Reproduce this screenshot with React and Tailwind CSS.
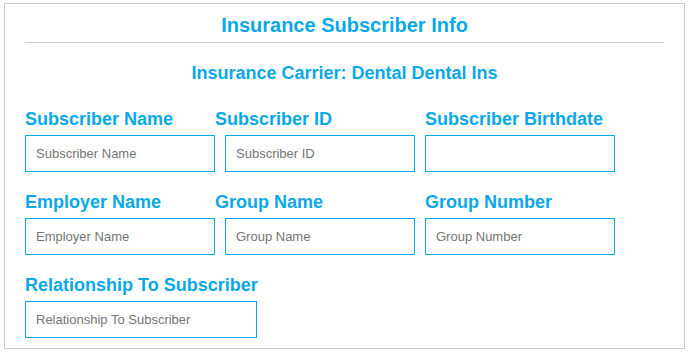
const fields = [
  [
    { label: 'Subscriber Name', placeholder: 'Subscriber Name' },
    { label: 'Subscriber ID', placeholder: 'Subscriber ID', shift: true },
    { label: 'Subscriber Birthdate', placeholder: '' },
  ],
  [
    { label: 'Employer Name', placeholder: 'Employer Name' },
    { label: 'Group Name', placeholder: 'Group Name', shift: true },
    { label: 'Group Number', placeholder: 'Group Number' },
  ],
];

const Field = ({ label, placeholder, shift, width = 'w-[190px]' }) => (
  <div className="flex flex-col">
    <label
      className={`text-[18px] leading-[20px] font-bold text-[#0aa8e8] mb-[6px] whitespace-nowrap ${
        shift ? '-ml-[10px]' : ''
      }`}
    >
      {label}
    </label>
    <input
      type="text"
      placeholder={placeholder}
      className={`${width} h-[37px] border border-[#0aa8e8] px-[10px] text-[13px] text-[#555] placeholder:text-[#757575] outline-none bg-white`}
    />
  </div>
);

export default function App() {
  return (
    <div
      className="w-[688px] h-[352px] bg-white pt-[3px] pl-[4px]"
      style={{ fontFamily: '"Liberation Sans", Arial, sans-serif' }}
    >
      <div className="w-[681px] h-[346px] border border-[#cccccc] px-[20px]">
        {/* Header */}
        <h1 className="text-[20px] leading-[24px] font-bold text-[#0aa8e8] text-center pt-[9px] pb-[5px] border-b border-[#cccccc]">
          Insurance Subscriber Info
        </h1>
        <h2 className="text-[18px] leading-[20px] font-bold text-[#0aa8e8] text-center mt-[20px]">
          Insurance Carrier: Dental Dental Ins
        </h2>

        {/* Form */}
        <div className="mt-[26px] flex flex-col gap-[20px]">
          {fields.map((row, i) => (
            <div key={i} className="flex gap-[10px]">
              {row.map((f) => (
                <Field key={f.label} {...f} />
              ))}
            </div>
          ))}
          <Field
            label="Relationship To Subscriber"
            placeholder="Relationship To Subscriber"
            width="w-[232px]"
          />
        </div>
      </div>
    </div>
  );
}
